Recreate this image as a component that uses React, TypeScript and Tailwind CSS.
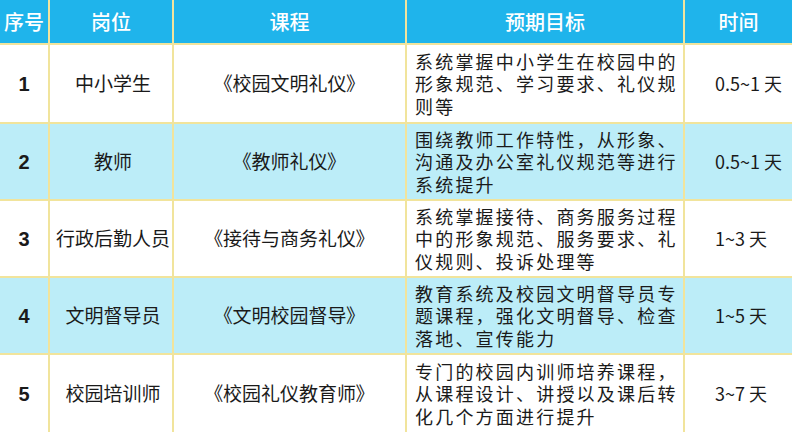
const rows = [
  {
    no: "1",
    role: "中小学生",
    course: "《校园文明礼仪》",
    goal: ["系统掌握中小学生在校园中的", "形象规范、学习要求、礼仪规", "则等"],
    time: "0.5~1 天",
  },
  {
    no: "2",
    role: "教师",
    course: "《教师礼仪》",
    goal: ["围绕教师工作特性，从形象、", "沟通及办公室礼仪规范等进行", "系统提升"],
    time: "0.5~1 天",
  },
  {
    no: "3",
    role: "行政后勤人员",
    course: "《接待与商务礼仪》",
    goal: ["系统掌握接待、商务服务过程", "中的形象规范、服务要求、礼", "仪规则、投诉处理等"],
    time: "1~3 天",
  },
  {
    no: "4",
    role: "文明督导员",
    course: "《文明校园督导》",
    goal: ["教育系统及校园文明督导员专", "题课程，强化文明督导、检查", "落地、宣传能力"],
    time: "1~5 天",
  },
  {
    no: "5",
    role: "校园培训师",
    course: "《校园礼仪教育师》",
    goal: ["专门的校园内训师培养课程，", "从课程设计、讲授以及课后转", "化几个方面进行提升"],
    time: "3~7 天",
  },
];

const cjk = "font-['Noto_Sans_CJK_SC',sans-serif]";

export default function App() {
  return (
    <div className="w-[792px] h-[432px] overflow-hidden bg-white">
      <div className="grid grid-cols-[48px_122px_231px_276px_107px] grid-rows-[43px_77px_75px_75px_75px_77px] gap-[2px] bg-[#f1e49c]">
        {["序号", "岗位", "课程", "预期目标", "时间"].map((h) => (
          <div
            key={h}
            className={`flex items-center justify-center bg-[#1fb4eb] text-white text-[20px] font-medium ${cjk}`}
          >
            {h}
          </div>
        ))}
        {rows.map((r, i) => {
          const bg = i % 2 === 1 ? "bg-[#bcedf8]" : "bg-white";
          return [
            <div
              key={r.no + "a"}
              className={`${bg} flex items-center justify-center text-[20px] font-bold text-[#1a1a1a] font-['Liberation_Sans',Arial,sans-serif]`}
            >
              {r.no}
            </div>,
            <div
              key={r.no + "b"}
              className={`${bg} flex items-center justify-center pl-[4px] text-[19px] text-[#1a1a1a] ${cjk}`}
            >
              {r.role}
            </div>,
            <div
              key={r.no + "c"}
              className={`${bg} flex items-center justify-center text-[19px] text-[#1a1a1a] [font-feature-settings:'palt'] ${cjk}`}
            >
              {r.course}
            </div>,
            <div
              key={r.no + "d"}
              className={`${bg} flex flex-col justify-center pl-[8px] text-[18px] leading-[22.5px] tracking-[2.2px] text-[#1a1a1a] whitespace-nowrap ${cjk}`}
            >
              {r.goal.map((l) => (
                <div key={l}>{l}</div>
              ))}
            </div>,
            <div
              key={r.no + "e"}
              className={`${bg} flex items-center pl-[30px] text-[18px] text-[#1a1a1a] ${cjk}`}
            >
              {r.time}
            </div>,
          ];
        })}
      </div>
    </div>
  );
}
